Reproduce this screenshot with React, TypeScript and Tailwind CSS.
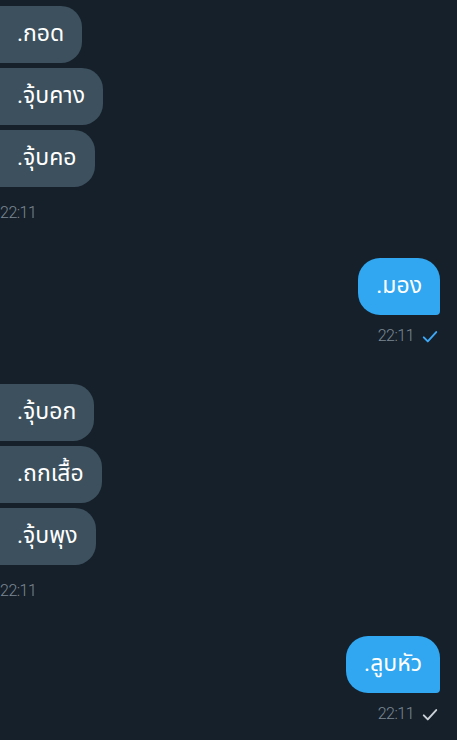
import React from "react";

const font = { fontFamily: "Roboto, 'Noto Sans', 'Noto Sans Thai', 'Liberation Sans', sans-serif" };

function Check({ className }: { className: string }) {
  return (
    <svg viewBox="0 0 18 14" className={className} fill="none" stroke="currentColor" strokeWidth="2.2" strokeLinecap="round" strokeLinejoin="round">
      <path d="M2 8l4.5 4.5L16 2" />
    </svg>
  );
}

function InGroup({ items }: { items: string[] }) {
  return (
    <div className="flex flex-col items-start">
      {items.map((t, i) => (
        <div key={i} className="-ml-[20px] mb-[5px] h-[57px] flex items-center rounded-[21px] bg-[#3c505d] pl-[37px] pr-[18px] text-[23px] text-white">
          {t}
        </div>
      ))}
      <div className="mt-[9px] text-[16px] font-light text-[#7b8893] tracking-[-0.5px]">22:11</div>
    </div>
  );
}

function OutGroup({ text, tickColor }: { text: string; tickColor: string }) {
  return (
    <div className="flex flex-col items-end pr-[17px]">
      <div className="h-[57px] flex items-center rounded-[22px] rounded-br-[4px] bg-[#30a7f0] px-[18px] text-[23px] text-white">
        {text}
      </div>
      <div className="mt-[9px] flex items-center gap-[8px] pr-[2px]">
        <span className="text-[16px] font-light text-[#7b8893] tracking-[-0.5px]">22:11</span>
        <Check className={"w-[16px] h-[13px] " + tickColor} />
      </div>
    </div>
  );
}

export default function App() {
  return (
    <div className="w-[457px] h-[740px] overflow-hidden bg-[#16202a]" style={font}>
      <div className="pt-[6px] flex flex-col">
        <InGroup items={[".กอด", ".จุ้บคาง", ".จุ้บคอ"]} />
        <div className="mt-[33px]">
          <OutGroup text=".มอง" tickColor="text-[#3ea8f4]" />
        </div>
        <div className="mt-[36px]">
          <InGroup items={[".จุ้บอก", ".ถกเสื้อ", ".จุ้บพุง"]} />
        </div>
        <div className="mt-[33px]">
          <OutGroup text=".ลูบหัว" tickColor="text-[#c9d0d6]" />
        </div>
      </div>
    </div>
  );
}
